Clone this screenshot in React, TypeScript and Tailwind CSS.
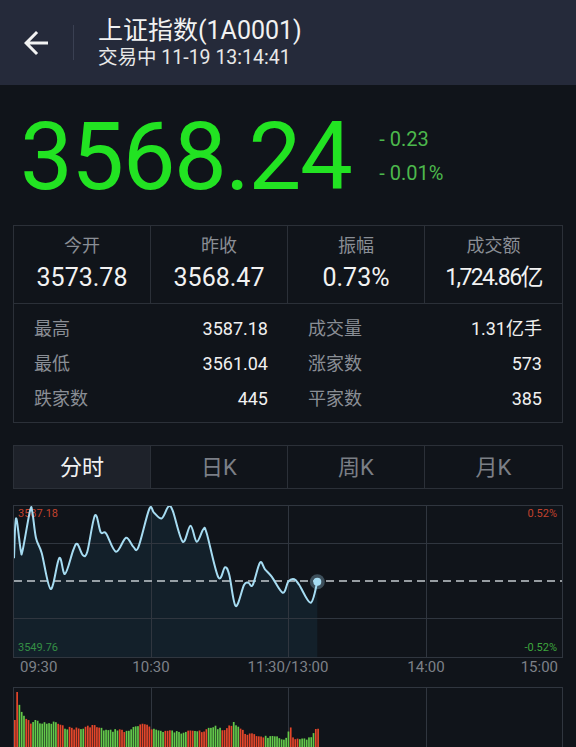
import React from "react";

const FONT = "font-[Roboto,'Noto_Sans_CJK_SC',sans-serif]";

const linePts: [number, number][] = [
  [14, 558.3], [16, 518.3], [20.7, 550], [22.7, 550], [30, 510.7], [32.3, 511.7], [36, 538], [41.7, 553],
  [50.7, 589], [59.3, 558], [65, 574], [73.3, 550], [77.3, 544], [82.7, 555], [87.3, 551.7], [95, 515.3],
  [100.7, 532.3], [106, 533.3], [116, 551.7], [126, 537.7], [133.3, 546.7], [138.3, 547.3], [149.3, 509],
  [154, 512.7], [161.7, 518.3], [168.3, 506.7], [172.7, 510.7], [182.7, 541.7], [190.5, 525.7], [196.7, 541.7],
  [203.3, 529.3], [206.7, 533.3], [218.3, 577.3], [225, 567.3], [229.3, 575], [235.7, 606], [244, 585],
  [248.3, 582.7], [252.7, 585], [260, 562.7], [265, 569.3], [271.7, 576.7], [282.7, 592.7], [288.3, 581.7],
  [294.3, 579.3], [299.3, 585], [310.7, 602.7], [317.3, 581.7],
];

function smoothPath(pts: [number, number][]) {
  let d = `M${pts[0][0]},${pts[0][1]}`;
  for (let i = 0; i < pts.length - 1; i++) {
    const p0 = pts[i - 1] || pts[i];
    const p1 = pts[i];
    const p2 = pts[i + 1];
    const p3 = pts[i + 2] || p2;
    const c1x = p1[0] + (p2[0] - p0[0]) / 6;
    const c1y = p1[1] + (p2[1] - p0[1]) / 6;
    const c2x = p2[0] - (p3[0] - p1[0]) / 6;
    const c2y = p2[1] - (p3[1] - p1[1]) / 6;
    d += ` C${c1x.toFixed(2)},${c1y.toFixed(2)} ${c2x.toFixed(2)},${c2y.toFixed(2)} ${p2[0]},${p2[1]}`;
  }
  return d;
}

const chartPts = linePts.map(([x, y]) => [x - 14, y - 506] as [number, number]);
const linePath = smoothPath(chartPts);
const last = chartPts[chartPts.length - 1];
const areaPath = `${linePath} L${last[0]},151 L${chartPts[0][0]},151 Z`;

const prof: [number, number][] = [
  [14, 720], [16.5, 692], [19, 709], [21.5, 714], [24, 717], [27, 721], [31, 723], [34, 720], [40, 723],
  [48, 724], [55, 722], [60, 726], [66, 728], [72, 728], [80, 729], [86, 727], [92, 725], [98, 728],
  [104, 730], [110, 731], [118, 729], [124, 732], [130, 729], [138, 726], [146, 724], [152, 729], [160, 731],
  [170, 731], [180, 733], [188, 729], [196, 731], [202, 733], [208, 728], [214, 726], [222, 731], [228, 727],
  [233, 722], [238, 727], [244, 733], [252, 735], [260, 736], [268, 737], [278, 738], [286, 739], [289, 725],
  [292, 738], [296, 740], [304, 739], [312, 738], [314, 728], [317, 730],
];
const redRanges: [number, number][] = [
  [13, 18], [25, 32], [57, 62], [68, 80], [83, 100], [117, 125], [138, 152], [163, 170], [185, 193],
  [198, 207], [220, 232], [238, 263], [288, 297], [313, 320],
];

function interp(x: number) {
  for (let i = 0; i < prof.length - 1; i++) {
    const [x0, y0] = prof[i];
    const [x1, y1] = prof[i + 1];
    if (x >= x0 && x <= x1) return y0 + ((y1 - y0) * (x - x0)) / (x1 - x0);
  }
  return prof[prof.length - 1][1];
}

let seed = 7;
function rnd() {
  seed = (seed * 9301 + 49297) % 233280;
  return seed / 233280;
}

const bars = Array.from({ length: 134 }, (_, i) => {
  const x = 14 + i * 2.28;
  let top = interp(x) + (rnd() - 0.5) * 3;
  if (i === 1) top = 692;
  const red = redRanges.some(([a, b]) => x >= a && x < b);
  return { x: x - 14, y: top - 688, red };
});

function ArrowBack() {
  return (
    <svg width="36" height="36" viewBox="0 0 24 24" fill="#f2f2f2">
      <path d="M20 11H7.83l5.59-5.59L12 4l-8 8 8 8 1.41-1.41L7.83 13H20v-2z" />
    </svg>
  );
}

function Stat({ label, value, last }: { label: string; value: string; last?: boolean }) {
  return (
    <div className={`flex flex-col items-center pt-[8px] pb-[10px] ${last ? "" : "border-r border-[#2b3038]"}`}>
      <div className="text-[18px] leading-[24px] text-[#8a8e95]">{label}</div>
      <div
        className={`mt-[5px] leading-[30px] text-[#f2f2f2] ${
          last ? "text-[23px] tracking-[-1.6px]" : "text-[25px]"
        }`}
      >
        {value}
      </div>
    </div>
  );
}

function Row({ label, value }: { label: string; value: string }) {
  return (
    <div className="flex h-[35px] items-center justify-between px-5">
      <span className="text-[18px] text-[#8a8e95]">{label}</span>
      <span className="text-[18px] text-[#f0f0f0]">{value}</span>
    </div>
  );
}

export default function App() {
  const tabs = ["分时", "日K", "周K", "月K"];
  return (
    <div className={`${FONT} h-[747px] w-[576px] overflow-hidden bg-[#10141a]`}>
      {/* Header */}
      <div className="flex h-[85px] items-center bg-[#252a3a]">
        <div className="ml-[18px] flex items-center">
          <ArrowBack />
        </div>
        <div className="ml-[19px] h-[35px] w-px bg-[#3a4052]" />
        <div className="ml-[24px] flex flex-col">
          <div className="text-[25px] leading-[30px] text-[#f2f2f2]">上证指数(1A0001)</div>
          <div className="text-[19.5px] leading-[24px] text-[#e8e8e8]">交易中 11-19 13:14:41</div>
        </div>
      </div>

      {/* Price */}
      <div className="mt-[25px] flex pl-[20px]">
        <div className="text-[94px] leading-[94px] tracking-[-1.5px] text-[#22e322]">3568.24</div>
        <div className="ml-[28px] flex flex-col gap-[10px] pt-[17px] text-[20px] leading-[24px] text-[#4cb84c]">
          <span>- 0.23</span>
          <span>- 0.01%</span>
        </div>
      </div>

      {/* Stats */}
      <div className="ml-[13px] mt-[21px] w-[550px] border border-[#2b3038]">
        <div className="grid grid-cols-4 border-b border-[#2b3038]">
          <Stat label="今开" value="3573.78" />
          <Stat label="昨收" value="3568.47" />
          <Stat label="振幅" value="0.73%" />
          <Stat label="成交额" value="1,724.86亿" last />
        </div>
        <div className="grid grid-cols-2 pt-[7px] pb-[6px]">
          <div className="flex flex-col">
            <Row label="最高" value="3587.18" />
            <Row label="最低" value="3561.04" />
            <Row label="跌家数" value="445" />
          </div>
          <div className="flex flex-col">
            <Row label="成交量" value="1.31亿手" />
            <Row label="涨家数" value="573" />
            <Row label="平家数" value="385" />
          </div>
        </div>
      </div>

      {/* Tabs */}
      <div className="ml-[13px] mt-[22px] grid h-[44px] w-[550px] grid-cols-4 border border-[#2b3038]">
        {tabs.map((t, i) => (
          <div
            key={t}
            className={`flex items-center justify-center text-[22px] ${
              i === 0 ? "bg-[#1e222a] text-[#f2f2f2]" : "text-[#7b7f86]"
            } ${i < 3 ? "border-r border-[#2b3038]" : ""}`}
          >
            {t}
          </div>
        ))}
      </div>

      {/* Chart */}
      <div className="relative ml-[13px] mt-[16px] h-[153px] w-[550px] border border-[#30363f]">
        <span className="absolute left-[4px] top-[1px] text-[11px] leading-[14px] text-[#c2422d]">3587.18</span>
        <span className="absolute right-[5px] top-[1px] text-[11px] leading-[14px] text-[#c2422d]">0.52%</span>
        <span className="absolute bottom-[2px] left-[4px] text-[11px] leading-[14px] text-[#3da53d]">3549.76</span>
        <span className="absolute bottom-[2px] right-[5px] text-[11px] leading-[14px] text-[#3da53d]">-0.52%</span>
        <svg className="absolute inset-0" width="548" height="151" viewBox="0 0 548 151">
          <path d={areaPath} fill="#1e465f" fillOpacity="0.24" />
          <g stroke="#30363f" strokeWidth="1">
            <line x1="0" y1="37.5" x2="548" y2="37.5" />
            <line x1="0" y1="112.5" x2="548" y2="112.5" />
            <line x1="137.5" y1="0" x2="137.5" y2="151" />
            <line x1="274.5" y1="0" x2="274.5" y2="151" />
            <line x1="412.5" y1="0" x2="412.5" y2="151" />
          </g>
          <line x1="0" y1="75" x2="548" y2="75" stroke="#c3cacf" strokeWidth="1.5" strokeDasharray="8 5" />
          <path d={linePath} fill="none" stroke="#a6dcf2" strokeWidth="2" strokeLinejoin="round" />
          <circle cx={last[0]} cy={last[1]} r="7.5" fill="#a6dcf2" fillOpacity="0.3" />
          <circle cx={last[0]} cy={last[1]} r="4" fill="#a6dcf2" />
        </svg>
      </div>

      {/* Time axis */}
      <div className="relative ml-[13px] h-[18px] w-[550px] text-[15px] leading-[18px] text-[#7d8188]">
        <span className="absolute left-[7px] top-0">09:30</span>
        <span className="absolute left-[138px] top-0 -translate-x-1/2">10:30</span>
        <span className="absolute left-[275px] top-0 -translate-x-1/2">11:30/13:00</span>
        <span className="absolute left-[413px] top-0 -translate-x-1/2">14:00</span>
        <span className="absolute right-[5px] top-0">15:00</span>
      </div>

      {/* Volume */}
      <div className="relative ml-[13px] mt-[11px] h-[70px] w-[550px] border border-[#30363f]">
        <svg className="absolute inset-0" width="548" height="68" viewBox="0 0 548 68">
          <g stroke="#30363f" strokeWidth="1">
            <line x1="137.5" y1="0" x2="137.5" y2="68" />
            <line x1="274.5" y1="0" x2="274.5" y2="68" />
            <line x1="412.5" y1="0" x2="412.5" y2="68" />
          </g>
          {bars.map((b, i) => (
            <rect key={i} x={b.x} y={b.y} width="1.7" height={68 - b.y} fill={b.red ? "#e4462a" : "#63c94a"} />
          ))}
        </svg>
      </div>
    </div>
  );
}
